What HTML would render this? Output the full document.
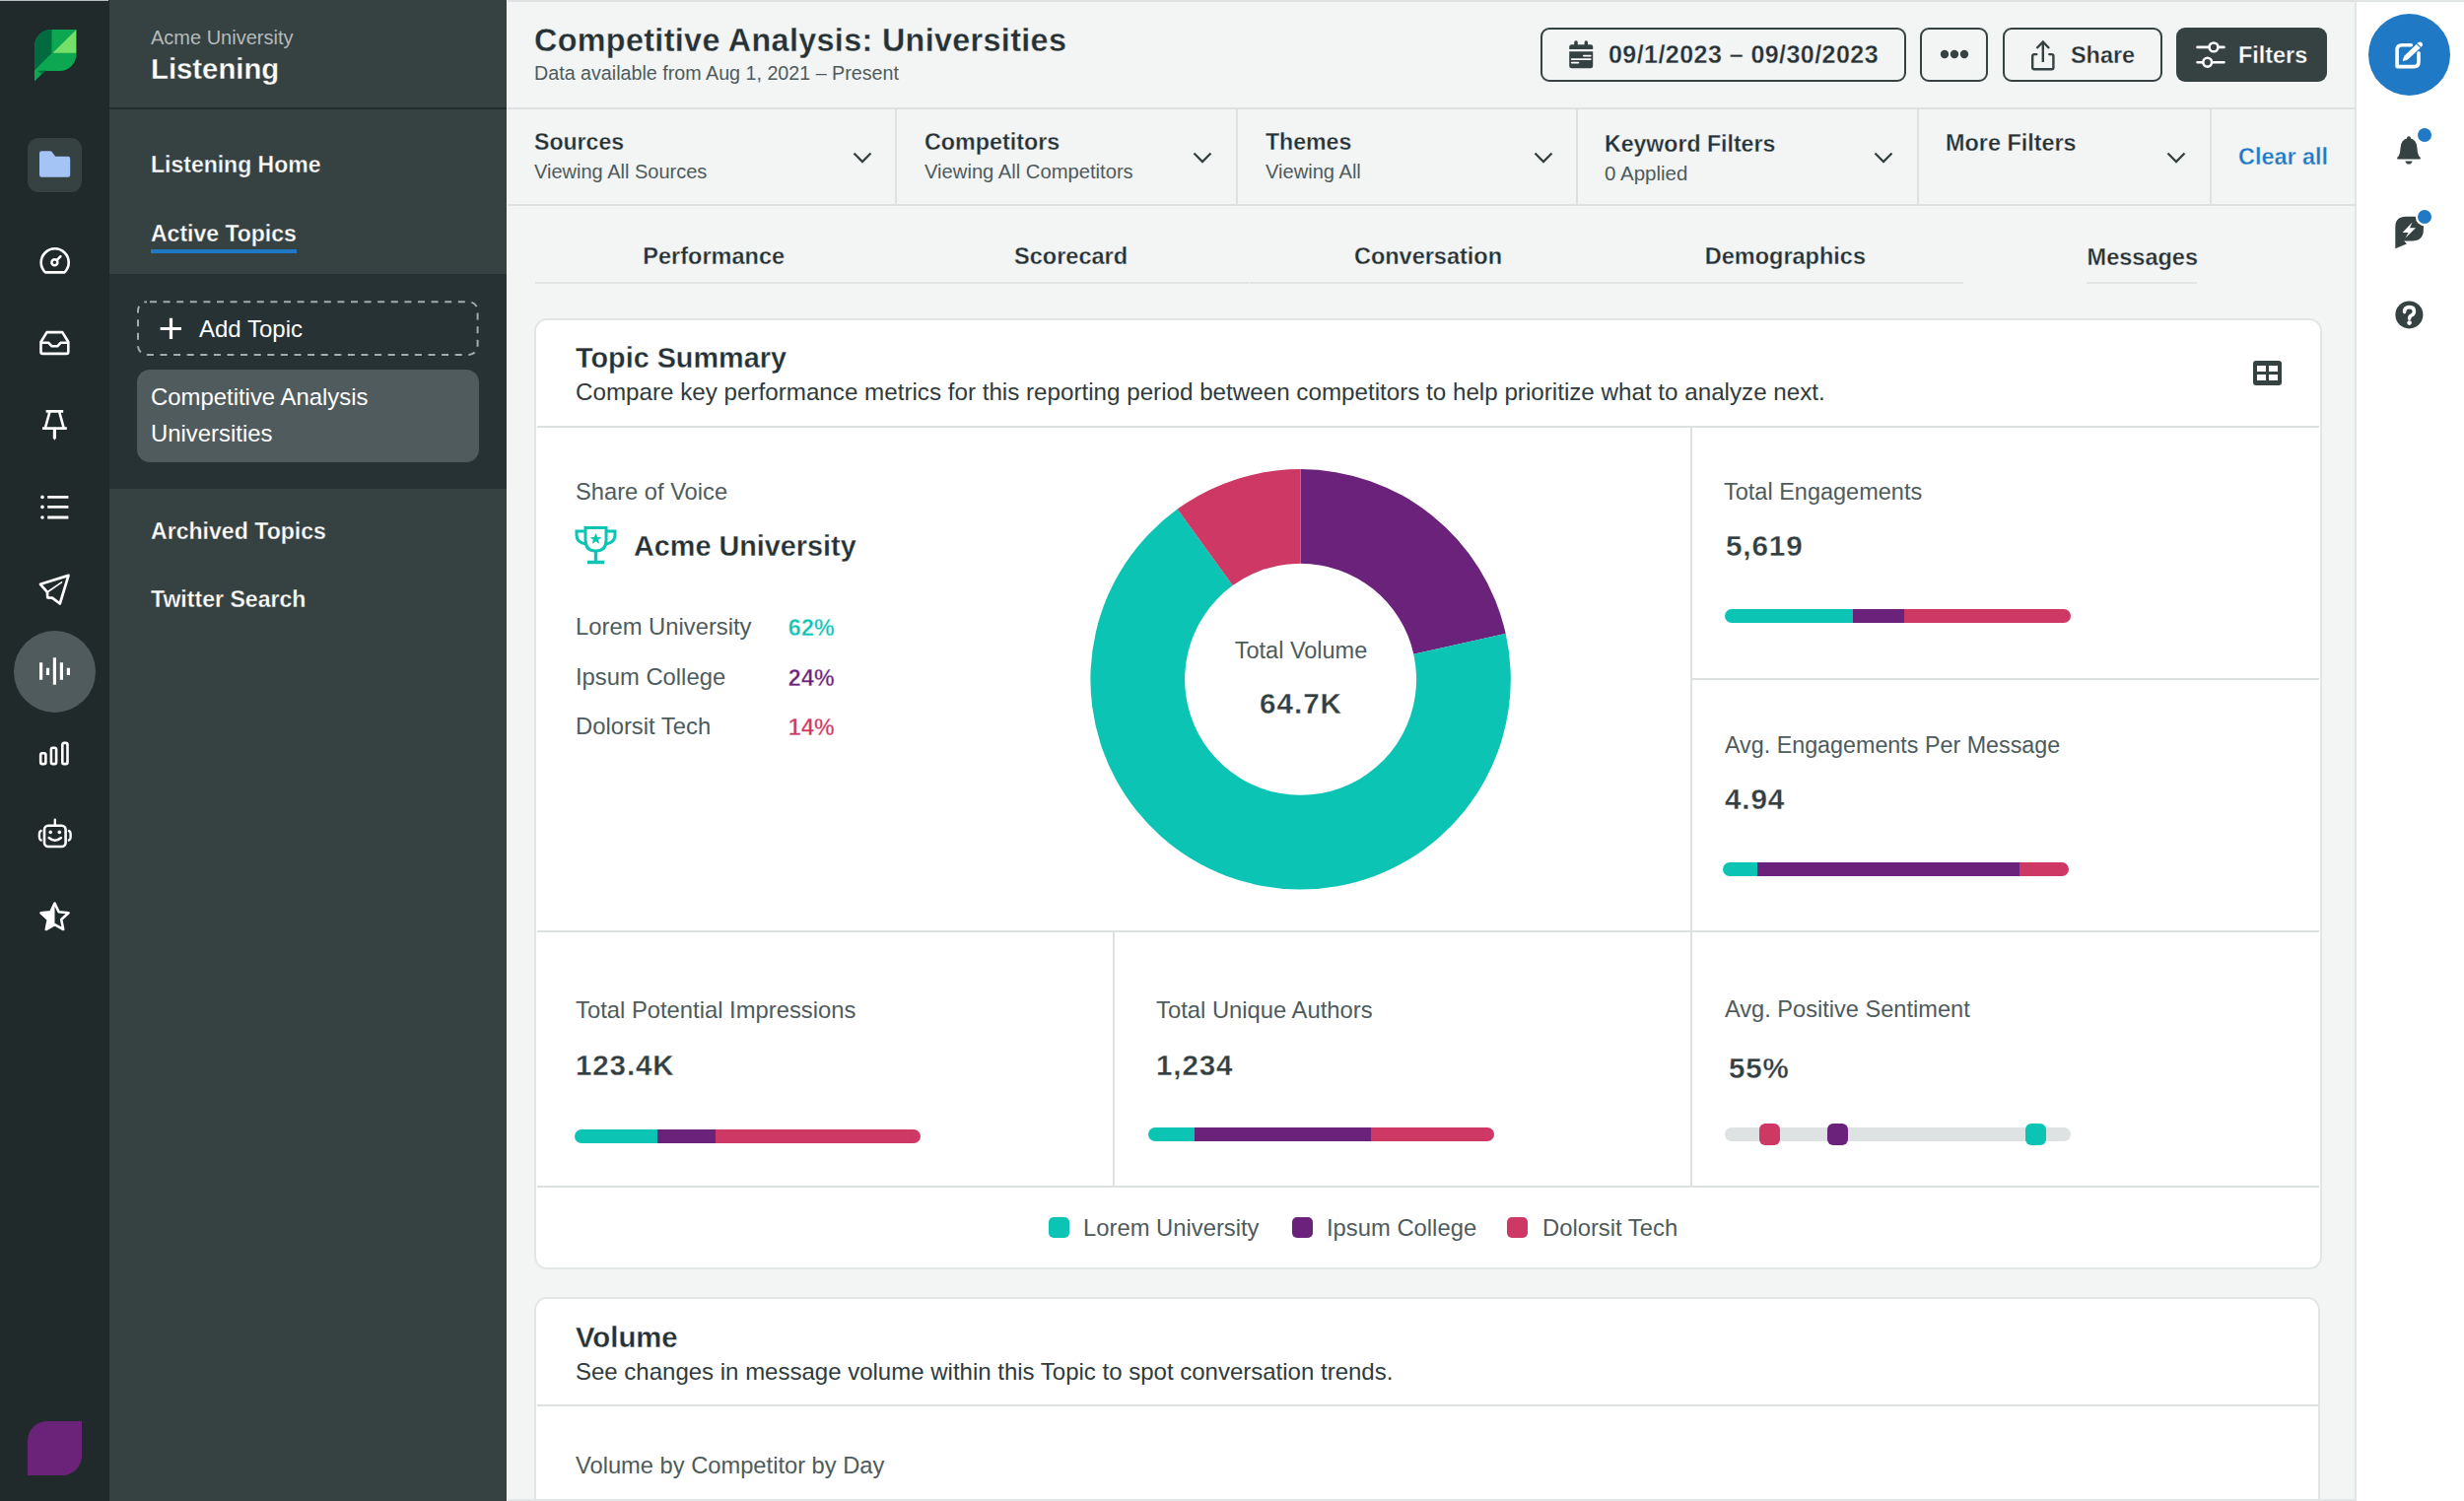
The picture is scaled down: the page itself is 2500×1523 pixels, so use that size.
<!DOCTYPE html>
<html><head><meta charset="utf-8"><style>
html,body{margin:0;padding:0;width:2500px;height:1523px;overflow:hidden;position:relative;background:#f3f4f4;font-family:"Liberation Sans", sans-serif}
.t{position:absolute;white-space:nowrap;line-height:1;font-family:"Liberation Sans", sans-serif}
.tab{position:absolute;top:248.7px;width:362.4px;text-align:center;font-size:23.5px;font-weight:bold;color:#253134;line-height:1;white-space:nowrap;-webkit-text-stroke:0.3px #f3f4f4}
</style></head><body>
<div style="position:absolute;left:0px;top:0px;width:111px;height:1523px;background:#212a2b"></div>
<div style="position:absolute;left:0px;top:0px;width:110px;height:1px;background:#b9bfbf"></div>
<div style="position:absolute;left:111px;top:0px;width:403px;height:1523px;background:#364142"></div>
<div style="position:absolute;left:111px;top:109px;width:403px;height:2px;background:#232c2d"></div>
<div style="position:absolute;left:111px;top:278px;width:403px;height:218px;background:#263233"></div>
<div style="position:absolute;left:514px;top:0px;width:1px;height:1523px;background:#ffffff"></div>
<div style="position:absolute;left:515px;top:0px;width:1875px;height:1523px;background:#f3f4f4"></div>
<div style="position:absolute;left:515px;top:0px;width:1875px;height:2px;background:#dfe2e2"></div>
<div style="position:absolute;left:2390px;top:0px;width:110px;height:1523px;background:#ffffff"></div>
<div style="position:absolute;left:2389px;top:0px;width:2px;height:1523px;background:#e2e5e5"></div>
<div style="position:absolute;left:2390px;top:0px;width:110px;height:2px;background:#e2e5e5"></div>
<svg style="position:absolute;left:35px;top:30px" width="43" height="53" viewBox="0 0 43 53"><defs><clipPath id="lc"><path d="M17,0 H42.5 V25 A17,17 0 0 1 25.5,42 H0 V17 A17,17 0 0 1 17,0 Z"/></clipPath></defs><g clip-path="url(#lc)"><rect width="43" height="43" fill="#0ca750"/><polygon points="0,0 17.5,0 17.5,24 0,41.5" fill="#006b3f"/><polygon points="42.5,0 42.5,23.8 18.5,23.8" fill="#76df6a"/></g><polygon points="0,41 0,52.5 11.5,41" fill="#0ca750"/><polygon points="3,42 11.5,41.5 8.5,45" fill="#006b3f"/></svg>
<div style="position:absolute;left:28px;top:140px;width:55px;height:55px;background:#364142;border-radius:11px"></div>
<svg style="position:absolute;left:39px;top:152px" width="34" height="29" viewBox="0 0 34 29"><path d="M3.2,1.2 H12 Q13,1.2 13.6,2 L16.8,6.3 Q17.2,6.8 17.8,6.8 H30 Q32.2,6.8 32.2,9 V25.6 Q32.2,27.8 30,27.8 H3.2 Q1,27.8 1,25.6 V3.4 Q1,1.2 3.2,1.2 Z" fill="#a4c4f5"/></svg>
<svg style="position:absolute;left:39px;top:248px" width="33" height="32" viewBox="0 0 33 32"><path d="M7,28.4 A14,14 0 1 1 26.4,28.4 Z" fill="none" stroke="#fff" stroke-width="2.6" stroke-linejoin="round"/><circle cx="16.4" cy="18.2" r="3" fill="none" stroke="#fff" stroke-width="2.5"/><line x1="18.8" y1="15.8" x2="22.4" y2="12.2" stroke="#fff" stroke-width="2.6" stroke-linecap="round"/></svg>
<svg style="position:absolute;left:39px;top:334px" width="33" height="28" viewBox="0 0 33 28"><path d="M2.5,13 L8.5,3.1 H24.3 L30.3,13 V23 Q30.3,24.9 28.4,24.9 H4.4 Q2.5,24.9 2.5,23 Z" fill="none" stroke="#fff" stroke-width="2.6" stroke-linejoin="round"/><path d="M2.5,13.8 H10.3 L13.6,17.3 H19.2 L22.5,13.8 H30.3" fill="none" stroke="#fff" stroke-width="2.6" stroke-linejoin="round"/></svg>
<svg style="position:absolute;left:42px;top:414px" width="27" height="34" viewBox="0 0 27 34"><path d="M4.6,3.4 H22.2 M1,20.6 H25.8" stroke="#fff" stroke-width="2.8" stroke-linecap="butt"/><path d="M8.4,4 L4,19.8 M18.2,4 L22.6,19.8" stroke="#fff" stroke-width="2.6"/><path d="M11.8,21 H15 V30.3 L13.4,32.8 L11.8,30.3 Z" fill="#fff"/></svg>
<svg style="position:absolute;left:40px;top:501px" width="31" height="27" viewBox="0 0 31 27"><circle cx="3" cy="3.4" r="1.8" fill="#fff"/><circle cx="3" cy="13.4" r="1.8" fill="#fff"/><circle cx="3" cy="24" r="1.8" fill="#fff"/><path d="M8.2,3.4 H29.4 M8.2,13.4 H29.4 M8.2,24 H29.4" stroke="#fff" stroke-width="2.8" stroke-linecap="butt"/></svg>
<svg style="position:absolute;left:39px;top:581px" width="33" height="35" viewBox="0 0 33 35"><path d="M30.5,2.9 L2,11.8 L9,19.8 L9.2,25.3 L14,25.6 L21.8,31.5 Z" fill="none" stroke="#fff" stroke-width="2.7" stroke-linejoin="round"/><path d="M9.5,19.5 L23.5,9.8" stroke="#fff" stroke-width="1.6" stroke-linecap="round"/></svg>
<div style="position:absolute;left:14px;top:640px;width:83px;height:83px;background:#4f5b5d;border-radius:50%"></div>
<svg style="position:absolute;left:39px;top:666px" width="33" height="31" viewBox="0 0 33 31"><path d="M2.6,6.3 V23.8 M9.5,11.8 V18.9 M16.4,1.2 V28.8 M23.4,6.3 V23.8 M30.4,11.8 V18.9" stroke="#fff" stroke-width="3.2"/></svg>
<svg style="position:absolute;left:39px;top:751px" width="33" height="28" viewBox="0 0 33 28"><rect x="2.2" y="13.3" width="5.2" height="10.8" rx="1.6" fill="none" stroke="#fff" stroke-width="2.6"/><rect x="12.9" y="7.8" width="5.2" height="16.3" rx="1.6" fill="none" stroke="#fff" stroke-width="2.6"/><rect x="24.3" y="2.9" width="5.2" height="21.2" rx="1.6" fill="none" stroke="#fff" stroke-width="2.6"/></svg>
<svg style="position:absolute;left:38px;top:830px" width="35" height="32" viewBox="0 0 35 32"><rect x="7" y="7.8" width="21.6" height="21.2" rx="4" fill="none" stroke="#fff" stroke-width="2.6"/><path d="M17.8,1.8 V7 M3.6,13 Q1.9,13.6 1.9,16 V19.5 Q1.9,21.9 3.6,22.5 M31.9,13 Q33.6,13.6 33.6,16 V19.5 Q33.6,21.9 31.9,22.5" fill="none" stroke="#fff" stroke-width="2.4" stroke-linecap="round"/><circle cx="13.2" cy="14.4" r="1.8" fill="#fff"/><circle cx="22.3" cy="14.4" r="1.8" fill="#fff"/><path d="M11.6,20 Q17.8,25.6 24,20" fill="none" stroke="#fff" stroke-width="2.4" stroke-linecap="round"/></svg>
<svg style="position:absolute;left:39px;top:914px" width="33" height="33" viewBox="0 0 33 33"><path d="M16.5,2.5 L20.6,11.2 L30.5,12.3 L23.2,19 L25.2,29 L16.5,24.2 L7.8,29 L9.8,19 L2.5,12.3 L12.4,11.2 Z" fill="none" stroke="#fff" stroke-width="2.6" stroke-linejoin="round"/><path d="M16.5,2.5 L12.4,11.2 L2.5,12.3 L9.8,19 L7.8,29 L16.5,24.2 Z" fill="#fff"/></svg>
<div style="position:absolute;left:28px;top:1442px;width:55px;height:55px;background:#6b2379;border-radius:20px 0 20px 0"></div>
<div class="t" style="left:153.0px;top:28.4px;font-size:20px;font-weight:normal;color:#b4bbbb;letter-spacing:0px;">Acme University</div>
<div class="t" style="left:153.0px;top:55.4px;font-size:29.3px;font-weight:bold;color:#ffffff;letter-spacing:0px;-webkit-text-stroke:0.3px #364142;">Listening</div>
<div class="t" style="left:153.0px;top:156.1px;font-size:23px;font-weight:bold;color:#ffffff;letter-spacing:0px;-webkit-text-stroke:0.3px #364142;">Listening Home</div>
<div class="t" style="left:153.0px;top:225.5px;font-size:23px;font-weight:bold;color:#ffffff;letter-spacing:0px;-webkit-text-stroke:0.3px #364142;">Active Topics</div>
<div style="position:absolute;left:153px;top:253px;width:148px;height:4px;background:#2079c5"></div>
<svg style="position:absolute;left:130px;top:296px" width="370" height="75" viewBox="0 0 370 75"><rect x="10" y="10.2" width="344.6" height="53.8" rx="9" fill="none" stroke="#a3abab" stroke-width="2" stroke-dasharray="7 6.6" stroke-dashoffset="-3"/></svg>
<svg style="position:absolute;left:162px;top:322px" width="23" height="23" viewBox="0 0 23 23"><path d="M11.5,0.8 V22 M0.6,11.5 H22" stroke="#fff" stroke-width="3.2"/></svg>
<div class="t" style="left:202.0px;top:322.2px;font-size:24px;font-weight:normal;color:#ffffff;letter-spacing:0px;">Add Topic</div>
<div style="position:absolute;left:139px;top:375px;width:347px;height:94px;background:#4f5b5d;border-radius:13px"></div>
<div class="t" style="left:153.0px;top:391.1px;font-size:23.9px;font-weight:normal;color:#ffffff;letter-spacing:0px;">Competitive Analysis</div>
<div class="t" style="left:153.0px;top:427.5px;font-size:23.9px;font-weight:normal;color:#ffffff;letter-spacing:0px;">Universities</div>
<div class="t" style="left:153.0px;top:527.7px;font-size:23.1px;font-weight:bold;color:#ffffff;letter-spacing:0px;-webkit-text-stroke:0.3px #364142;">Archived Topics</div>
<div class="t" style="left:153.0px;top:597.1px;font-size:23.1px;font-weight:bold;color:#ffffff;letter-spacing:0px;-webkit-text-stroke:0.3px #364142;">Twitter Search</div>
<div class="t" style="left:542.0px;top:25.3px;font-size:32.3px;font-weight:bold;color:#253134;letter-spacing:0.35px;-webkit-text-stroke:0.3px #f3f4f4;">Competitive Analysis: Universities</div>
<div class="t" style="left:542.0px;top:64.7px;font-size:19.7px;font-weight:normal;color:#4e5b5d;letter-spacing:0px;">Data available from Aug 1, 2021 – Present</div>
<div style="position:absolute;left:1563px;top:28px;width:371px;height:55px;box-sizing:border-box;border:2px solid #364142;border-radius:9px"></div>
<svg style="position:absolute;left:1590px;top:40px" width="28" height="32" viewBox="0 0 28 32"><rect x="7.2" y="1.3" width="3.6" height="6" rx="1.6" fill="#364142"/><rect x="17.6" y="1.3" width="3.4" height="6" rx="1.6" fill="#364142"/><path d="M2.2,10 V7.6 Q2.2,5.2 4.6,5.2 H23.8 Q26.2,5.2 26.2,7.6 V10 Z" fill="#364142"/><path d="M2.2,12.2 H26.2 V26.9 Q26.2,29.3 23.8,29.3 H4.6 Q2.2,29.3 2.2,26.9 Z" fill="#364142"/><rect x="16" y="15.8" width="8.7" height="1.6" rx="0.8" fill="#fff"/><rect x="3.8" y="19.2" width="20.9" height="1.7" rx="0.8" fill="#fff"/><rect x="3.8" y="22.8" width="8.5" height="1.6" rx="0.8" fill="#fff"/></svg>
<div class="t" style="left:1632.0px;top:43.0px;font-size:25px;font-weight:bold;color:#253134;letter-spacing:0.45px;-webkit-text-stroke:0.3px #f3f4f4;">09/1/2023 – 09/30/2023</div>
<div style="position:absolute;left:1948px;top:28px;width:69px;height:55px;box-sizing:border-box;border:2px solid #364142;border-radius:9px"></div>
<svg style="position:absolute;left:1968px;top:49px" width="30" height="12" viewBox="0 0 30 12"><circle cx="5" cy="6" r="4.2" fill="#364142"/><circle cx="15" cy="6" r="4.2" fill="#364142"/><circle cx="25" cy="6" r="4.2" fill="#364142"/></svg>
<div style="position:absolute;left:2032px;top:28px;width:162px;height:55px;box-sizing:border-box;border:2px solid #364142;border-radius:9px"></div>
<svg style="position:absolute;left:2058px;top:40px" width="30" height="33" viewBox="0 0 30 33"><path d="M14.8,3 V23 M8.5,9 L14.8,2.5 L21.1,9" fill="none" stroke="#364142" stroke-width="2.4" stroke-linecap="butt" stroke-linejoin="miter"/><path d="M8.3,15.1 H6 Q4.2,15.1 4.2,16.9 V28.4 Q4.2,30.2 6,30.2 H23.6 Q25.4,30.2 25.4,28.4 V16.9 Q25.4,15.1 23.6,15.1 H21.3" fill="none" stroke="#364142" stroke-width="2.4" stroke-linecap="round"/></svg>
<div class="t" style="left:2101.0px;top:44.7px;font-size:23.4px;font-weight:bold;color:#253134;letter-spacing:0px;-webkit-text-stroke:0.3px #f3f4f4;">Share</div>
<div style="position:absolute;left:2208px;top:28px;width:153px;height:55px;background:#364142;border-radius:9px"></div>
<svg style="position:absolute;left:2227px;top:40px" width="32" height="30" viewBox="0 0 32 30"><path d="M2.5,7.9 H29.5 M2.5,23.2 H29.5" stroke="#fff" stroke-width="2.6" stroke-linecap="round"/><circle cx="19" cy="7.9" r="4.4" fill="#364142" stroke="#fff" stroke-width="2.6"/><circle cx="12.7" cy="23.2" r="4.4" fill="#364142" stroke="#fff" stroke-width="2.6"/></svg>
<div class="t" style="left:2271.0px;top:44.7px;font-size:23.4px;font-weight:bold;color:#ffffff;letter-spacing:0px;-webkit-text-stroke:0.3px #364142;">Filters</div>
<div style="position:absolute;left:515px;top:109px;width:1875px;height:2px;background:#dde0e0"></div>
<div style="position:absolute;left:515px;top:207px;width:1875px;height:2px;background:#dee1e1"></div>
<div style="position:absolute;left:908px;top:111px;width:2px;height:96px;background:#dee1e1"></div>
<div style="position:absolute;left:1254px;top:111px;width:2px;height:96px;background:#dee1e1"></div>
<div style="position:absolute;left:1599px;top:111px;width:2px;height:96px;background:#dee1e1"></div>
<div style="position:absolute;left:1945px;top:111px;width:2px;height:96px;background:#dee1e1"></div>
<div style="position:absolute;left:2242px;top:111px;width:2px;height:96px;background:#dee1e1"></div>
<div class="t" style="left:542.0px;top:133.4px;font-size:23.1px;font-weight:bold;color:#253134;letter-spacing:0px;-webkit-text-stroke:0.3px #f3f4f4;">Sources</div>
<div class="t" style="left:542.0px;top:164.0px;font-size:20px;font-weight:normal;color:#4e5b5d;letter-spacing:0px;">Viewing All Sources</div>
<svg style="position:absolute;left:865px;top:154px" width="20" height="12" viewBox="0 0 20 12"><path d="M1.5,1.5 L10,10 L18.5,1.5" fill="none" stroke="#364142" stroke-width="2.3"/></svg>
<div class="t" style="left:938.0px;top:133.3px;font-size:23.3px;font-weight:bold;color:#253134;letter-spacing:0px;-webkit-text-stroke:0.3px #f3f4f4;">Competitors</div>
<div class="t" style="left:938.0px;top:163.8px;font-size:20.2px;font-weight:normal;color:#4e5b5d;letter-spacing:0px;">Viewing All Competitors</div>
<svg style="position:absolute;left:1210px;top:154px" width="20" height="12" viewBox="0 0 20 12"><path d="M1.5,1.5 L10,10 L18.5,1.5" fill="none" stroke="#364142" stroke-width="2.3"/></svg>
<div class="t" style="left:1284.0px;top:133.4px;font-size:23.1px;font-weight:bold;color:#253134;letter-spacing:0px;-webkit-text-stroke:0.3px #f3f4f4;">Themes</div>
<div class="t" style="left:1284.0px;top:163.9px;font-size:20.1px;font-weight:normal;color:#4e5b5d;letter-spacing:0px;">Viewing All</div>
<svg style="position:absolute;left:1556px;top:154px" width="20" height="12" viewBox="0 0 20 12"><path d="M1.5,1.5 L10,10 L18.5,1.5" fill="none" stroke="#364142" stroke-width="2.3"/></svg>
<div class="t" style="left:1628.0px;top:135.4px;font-size:23.1px;font-weight:bold;color:#253134;letter-spacing:0px;-webkit-text-stroke:0.3px #f3f4f4;">Keyword Filters</div>
<div class="t" style="left:1628.0px;top:165.6px;font-size:20.5px;font-weight:normal;color:#4e5b5d;letter-spacing:0px;">0 Applied</div>
<svg style="position:absolute;left:1901px;top:154px" width="20" height="12" viewBox="0 0 20 12"><path d="M1.5,1.5 L10,10 L18.5,1.5" fill="none" stroke="#364142" stroke-width="2.3"/></svg>
<div class="t" style="left:1974.0px;top:134.1px;font-size:23.4px;font-weight:bold;color:#253134;letter-spacing:0px;-webkit-text-stroke:0.3px #f3f4f4;">More Filters</div>
<svg style="position:absolute;left:2198px;top:154px" width="20" height="12" viewBox="0 0 20 12"><path d="M1.5,1.5 L10,10 L18.5,1.5" fill="none" stroke="#364142" stroke-width="2.3"/></svg>
<div class="t" style="left:2271.0px;top:147.7px;font-size:23.4px;font-weight:bold;color:#2079c5;letter-spacing:0px;-webkit-text-stroke:0.3px #f3f4f4;">Clear all</div>
<div style="position:absolute;left:543px;top:286px;width:362px;height:2px;background:#e1e4e4"></div>
<div style="position:absolute;left:905px;top:286px;width:362px;height:2px;background:#e1e4e4"></div>
<div style="position:absolute;left:1268px;top:286px;width:362px;height:2px;background:#e1e4e4"></div>
<div style="position:absolute;left:1630px;top:286px;width:362px;height:2px;background:#e1e4e4"></div>
<div class="tabs"><div class="tab" style="left:543.0px;">Performance</div><div class="tab" style="left:905.4px;">Scorecard</div><div class="tab" style="left:1267.8px;">Conversation</div><div class="tab" style="left:1630.2px;">Demographics</div><div class="tab" style="left:1992.6px;margin-top:1.5px">Messages</div></div>
<div style="position:absolute;left:2117px;top:286px;width:112px;height:2px;background:#e1e4e4"></div>
<div style="position:absolute;left:542px;top:323px;width:1814px;height:965px;box-sizing:border-box;background:#fff;border:2px solid #e3e6e6;border-radius:13px"></div>
<div class="t" style="left:584.0px;top:348.5px;font-size:28.8px;font-weight:bold;color:#253134;letter-spacing:0px;-webkit-text-stroke:0.3px #ffffff;">Topic Summary</div>
<div class="t" style="left:584.0px;top:386.0px;font-size:24.2px;font-weight:normal;color:#2f3b3d;letter-spacing:0px;">Compare key performance metrics for this reporting period between competitors to help prioritize what to analyze next.</div>
<svg style="position:absolute;left:2286px;top:366px" width="29" height="25" viewBox="0 0 29 25"><rect width="29" height="25" rx="3" fill="#364142"/><rect x="4" y="5" width="9" height="6" fill="#fff"/><rect x="16" y="5" width="9" height="6" fill="#fff"/><rect x="4" y="14" width="9" height="6" fill="#fff"/><rect x="16" y="14" width="9" height="6" fill="#fff"/></svg>
<div style="position:absolute;left:545px;top:432px;width:1808px;height:2px;background:#dee1e1"></div>
<div style="position:absolute;left:1715px;top:434px;width:2px;height:511px;background:#dee1e1"></div>
<div style="position:absolute;left:1717px;top:688px;width:636px;height:2px;background:#dee1e1"></div>
<div style="position:absolute;left:545px;top:944px;width:1808px;height:2px;background:#dee1e1"></div>
<div style="position:absolute;left:1129px;top:946px;width:2px;height:258px;background:#dee1e1"></div>
<div style="position:absolute;left:1715px;top:946px;width:2px;height:258px;background:#dee1e1"></div>
<div style="position:absolute;left:545px;top:1203px;width:1808px;height:2px;background:#dee1e1"></div>
<div class="t" style="left:584.0px;top:487.9px;font-size:23.7px;font-weight:normal;color:#4e5b5d;letter-spacing:0px;">Share of Voice</div>
<svg style="position:absolute;left:583px;top:534px" width="43" height="39" viewBox="0 0 43 39"><path d="M11,1.5 H32 V14 Q32,25 21.5,25 Q11,25 11,14 Z" fill="none" stroke="#0bc4b4" stroke-width="3"/><path d="M11,5 H2 V9 Q2,16 11,18 M32,5 H41 V9 Q41,16 32,18" fill="none" stroke="#0bc4b4" stroke-width="3"/><path d="M21.5,25 V35 M13,36.5 H30" stroke="#0bc4b4" stroke-width="3.4"/><path d="M21.5,7 L23.2,11 L27.3,11.2 L24.1,13.8 L25.2,17.8 L21.5,15.5 L17.8,17.8 L18.9,13.8 L15.7,11.2 L19.8,11 Z" fill="#0bc4b4"/></svg>
<div class="t" style="left:643.0px;top:539.9px;font-size:28.8px;font-weight:bold;color:#253134;letter-spacing:0px;-webkit-text-stroke:0.3px #ffffff;">Acme University</div>
<div class="t" style="left:584.0px;top:624.1px;font-size:23.8px;font-weight:normal;color:#4e5b5d;letter-spacing:0px;">Lorem University</div>
<div class="t" style="left:584.0px;top:674.5px;font-size:23.8px;font-weight:normal;color:#4e5b5d;letter-spacing:0px;">Ipsum College</div>
<div class="t" style="left:584.0px;top:724.9px;font-size:23.8px;font-weight:normal;color:#4e5b5d;letter-spacing:0px;">Dolorsit Tech</div>
<div class="t" style="right:1653px;top:626.4px;font-size:23.2px;font-weight:bold;color:#0bc4b4;letter-spacing:0.3px;-webkit-text-stroke:0.35px #fff">62%</div>
<div class="t" style="right:1653px;top:676.7px;font-size:23.2px;font-weight:bold;color:#6b227a;letter-spacing:0.3px;-webkit-text-stroke:0.35px #fff">24%</div>
<div class="t" style="right:1653px;top:726.9px;font-size:23.2px;font-weight:bold;color:#cd3865;letter-spacing:0.3px;-webkit-text-stroke:0.35px #fff">14%</div>
<svg style="position:absolute;left:0;top:0" width="2500" height="1523"><path d="M1319.60,476.10 A213.2,213.2 0 0 1 1527.67,642.79 L1434.27,663.67 A117.5,117.5 0 0 0 1319.60,571.80 Z" fill="#6b227a"/><path d="M1527.67,642.79 A213.2,213.2 0 1 1 1194.59,516.60 L1250.70,594.12 A117.5,117.5 0 1 0 1434.27,663.67 Z" fill="#0bc4b4"/><path d="M1194.59,516.60 A213.2,213.2 0 0 1 1319.60,476.10 L1319.60,571.80 A117.5,117.5 0 0 0 1250.70,594.12 Z" fill="#cd3865"/></svg>
<div class="t" style="left:1120px;width:400px;text-align:center;top:649.1px;font-size:23.5px;color:#4e5b5d">Total Volume</div>
<div class="t" style="left:1120px;width:400px;text-align:center;top:699.0px;font-size:29.6px;font-weight:bold;color:#323e40;letter-spacing:1px;-webkit-text-stroke:0.3px #fff">64.7K</div>
<div class="t" style="left:1749.0px;top:488.1px;font-size:23.5px;font-weight:normal;color:#4e5b5d;letter-spacing:0px;">Total Engagements</div>
<div class="t" style="left:1751.0px;top:539.1px;font-size:29.7px;font-weight:bold;color:#323e40;letter-spacing:0.85px;-webkit-text-stroke:0.3px #ffffff;">5,619</div>
<div style="position:absolute;left:1750px;top:618px;width:351px;height:14px;border-radius:7.0px;overflow:hidden;display:flex"><div style="width:130.1px;background:#0bc4b4"></div><div style="width:51.9px;background:#6b227a"></div><div style="width:169.0px;background:#cd3865"></div></div>
<div class="t" style="left:1750.0px;top:745.1px;font-size:23.3px;font-weight:normal;color:#4e5b5d;letter-spacing:0px;">Avg. Engagements Per Message</div>
<div class="t" style="left:1750.0px;top:796.3px;font-size:29.7px;font-weight:bold;color:#323e40;letter-spacing:0.85px;-webkit-text-stroke:0.3px #ffffff;">4.94</div>
<div style="position:absolute;left:1748px;top:875px;width:351px;height:14px;border-radius:7.0px;overflow:hidden;display:flex"><div style="width:35.0px;background:#0bc4b4"></div><div style="width:266.0px;background:#6b227a"></div><div style="width:50.0px;background:#cd3865"></div></div>
<div class="t" style="left:584.0px;top:1012.7px;font-size:23.8px;font-weight:normal;color:#4e5b5d;letter-spacing:0px;">Total Potential Impressions</div>
<div class="t" style="left:584.0px;top:1065.5px;font-size:29.5px;font-weight:bold;color:#323e40;letter-spacing:0.9px;-webkit-text-stroke:0.3px #ffffff;">123.4K</div>
<div style="position:absolute;left:583px;top:1146px;width:351px;height:14px;border-radius:7.0px;overflow:hidden;display:flex"><div style="width:83.6px;background:#0bc4b4"></div><div style="width:59.1px;background:#6b227a"></div><div style="width:208.3px;background:#cd3865"></div></div>
<div class="t" style="left:1173.0px;top:1012.7px;font-size:23.8px;font-weight:normal;color:#4e5b5d;letter-spacing:0px;">Total Unique Authors</div>
<div class="t" style="left:1173.0px;top:1065.5px;font-size:29.5px;font-weight:bold;color:#323e40;letter-spacing:0.9px;-webkit-text-stroke:0.3px #ffffff;">1,234</div>
<div style="position:absolute;left:1165px;top:1144px;width:351px;height:14px;border-radius:7.0px;overflow:hidden;display:flex"><div style="width:46.8px;background:#0bc4b4"></div><div style="width:178.9px;background:#6b227a"></div><div style="width:125.3px;background:#cd3865"></div></div>
<div class="t" style="left:1750.0px;top:1012.8px;font-size:23.6px;font-weight:normal;color:#4e5b5d;letter-spacing:0px;">Avg. Positive Sentiment</div>
<div class="t" style="left:1754.0px;top:1069.2px;font-size:29.5px;font-weight:bold;color:#323e40;letter-spacing:0.9px;-webkit-text-stroke:0.3px #ffffff;">55%</div>
<div style="position:absolute;left:1750px;top:1144px;width:351px;height:14px;background:#dfe2e3;border-radius:7px"></div>
<div style="position:absolute;left:1785px;top:1140px;width:21px;height:22px;background:#cd3865;border-radius:6px"></div>
<div style="position:absolute;left:1854px;top:1140px;width:21px;height:22px;background:#6b227a;border-radius:6px"></div>
<div style="position:absolute;left:2055px;top:1140px;width:21px;height:22px;background:#0bc4b4;border-radius:6px"></div>
<div style="position:absolute;left:1064px;top:1235px;width:21px;height:21px;background:#0bc4b4;border-radius:5px"></div>
<div class="t" style="left:1099.0px;top:1233.8px;font-size:23.8px;font-weight:normal;color:#4e5b5d;letter-spacing:0px;">Lorem University</div>
<div style="position:absolute;left:1311px;top:1235px;width:21px;height:21px;background:#6b227a;border-radius:5px"></div>
<div class="t" style="left:1346.0px;top:1233.8px;font-size:23.8px;font-weight:normal;color:#4e5b5d;letter-spacing:0px;">Ipsum College</div>
<div style="position:absolute;left:1529px;top:1235px;width:21px;height:21px;background:#cd3865;border-radius:5px"></div>
<div class="t" style="left:1565.0px;top:1233.8px;font-size:23.8px;font-weight:normal;color:#4e5b5d;letter-spacing:0px;">Dolorsit Tech</div>
<div style="position:absolute;left:542px;top:1316px;width:1812px;height:260px;box-sizing:border-box;background:#fff;border:2px solid #e3e6e6;border-radius:13px"></div>
<div class="t" style="left:584.0px;top:1341.6px;font-size:29.3px;font-weight:bold;color:#253134;letter-spacing:0px;-webkit-text-stroke:0.3px #ffffff;">Volume</div>
<div class="t" style="left:584.0px;top:1380.2px;font-size:24.0px;font-weight:normal;color:#2f3b3d;letter-spacing:0px;">See changes in message volume within this Topic to spot conversation trends.</div>
<div style="position:absolute;left:545px;top:1425px;width:1808px;height:2px;background:#dee1e1"></div>
<div class="t" style="left:584.0px;top:1475.8px;font-size:23.7px;font-weight:normal;color:#4e5b5d;letter-spacing:0px;">Volume by Competitor by Day</div>
<div style="position:absolute;left:515px;top:1521px;width:1875px;height:2px;background:#e3e6e6"></div>
<div style="position:absolute;left:2403px;top:14px;width:83px;height:83px;background:#2079c5;border-radius:50%"></div>
<svg style="position:absolute;left:2428px;top:40px" width="32" height="32" viewBox="0 0 32 32"><path d="M18.3,5.7 H9 Q4.1,5.7 4.1,10.6 V27.6 H21.1 Q26,27.6 26,22.7 V13.8" fill="none" stroke="#fff" stroke-width="3.6" stroke-linecap="round" stroke-linejoin="round"/><path d="M9.8,21.9 Q10.4,18.3 11.6,16.6 L25.5,3.3 Q27.5,1.6 29.3,3.4 Q31,5.2 29.3,7.1 L15.2,20.3 Q13.5,21.5 9.8,21.9 Z" fill="#fff"/><path d="M24.2,4.5 L28.2,8.4" stroke="#2079c5" stroke-width="1.1"/></svg>
<svg style="position:absolute;left:2429px;top:137px" width="30" height="32" viewBox="0 0 30 32"><path d="M15,3.3 Q23.3,3.8 23.6,14 Q23.8,20.5 26.5,22.6 Q27.5,23.6 26.3,24.6 H3.7 Q2.5,23.6 3.5,22.6 Q6.2,20.5 6.4,14 Q6.7,3.8 15,3.3 Z" fill="#364142"/><path d="M11.3,26.5 H18.7 Q17.8,29.6 15,29.6 Q12.2,29.6 11.3,26.5 Z" fill="#364142"/><circle cx="15" cy="3.3" r="2" fill="#364142"/></svg>
<div style="position:absolute;left:2453px;top:130px;width:14px;height:14px;background:#2079c5;border-radius:50%"></div>
<svg style="position:absolute;left:2428px;top:216px" width="40" height="38" viewBox="0 0 40 38"><path d="M2.3,36.2 V14.5 Q2.3,3.7 13.1,3.7 H30.9 V16.8 Q30.9,28.6 19.1,28.6 H11.5 L14.2,31.3 Z" fill="#364142"/><circle cx="32" cy="4" r="9.2" fill="#fff"/><path d="M19.5,9.5 L9.6,20 H15.6 L12.5,25.4 L23,15.2 H17 Z" fill="#fff"/><path d="M11.8,28.7 L14.8,31.6" stroke="#fff" stroke-width="1"/></svg>
<div style="position:absolute;left:2453px;top:213px;width:14px;height:14px;background:#2079c5;border-radius:50%"></div>
<svg style="position:absolute;left:2430px;top:305px" width="29" height="29" viewBox="0 0 29 29"><circle cx="14.4" cy="14.4" r="14" fill="#364142"/><path d="M9.6,11.6 Q9.6,6.6 14.6,6.6 Q19.4,6.6 19.4,10.9 Q19.4,13.6 16.6,15 Q14.6,16 14.6,18.2" fill="none" stroke="#fff" stroke-width="3.6" stroke-linecap="round"/><circle cx="14.6" cy="22.6" r="2.3" fill="#fff"/></svg>
</body></html>
